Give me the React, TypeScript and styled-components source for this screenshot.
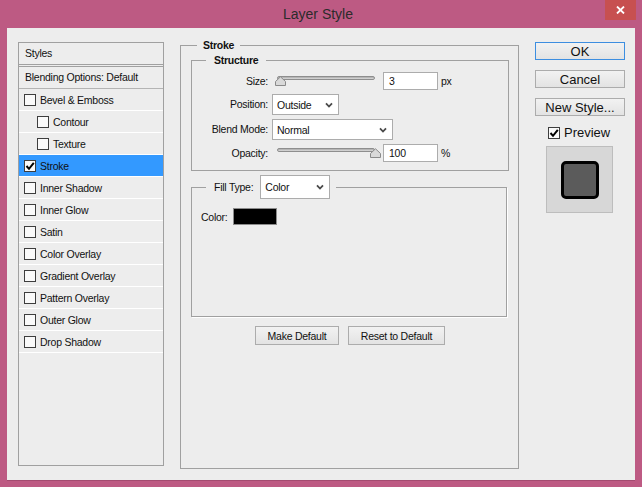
import React from "react";
import styled, { createGlobalStyle } from "styled-components";

const GlobalStyle = createGlobalStyle`
  html, body { margin: 0; padding: 0; }
  body {
    background: #bd5a83;
    font-family: "Liberation Sans", Arial, sans-serif;
    overflow: hidden;
  }
  * { box-sizing: border-box; }
`;

const Window = styled.div`
  width: 642px;
  height: 487px;
  background: #bd5a83;
  display: flex;
  flex-direction: column;
`;

const TitleBar = styled.div`
  height: 28px;
  flex: none;
  display: grid;
  grid-template-columns: 1fr auto 1fr;
  align-items: start;
  padding-right: 6px;
`;

const Title = styled.div`
  grid-column: 2;
  font-size: 14px;
  line-height: 16px;
  padding-top: 6px;
  color: #2b2b2b;
`;

const CloseButton = styled.div`
  grid-column: 3;
  justify-self: end;
  width: 31px;
  height: 20px;
  background: #c75050;
  display: flex;
  align-items: center;
  justify-content: center;
`;

const Content = styled.div`
  margin: 0 7px;
  height: 452px;
  background: #ededed;
  display: flex;
  align-items: flex-start;
  padding: 11px 0 0 11px;
  box-shadow: 0 1px 0 #a34b70;
  font-size: 10.5px;
  letter-spacing: -0.25px;
  color: #111;
`;

/* ---------- styles list ---------- */

const StyleList = styled.div`
  margin-top: 3px;
  width: 146px;
  height: 424px;
  flex: none;
  border: 1px solid #a0a0a0;
  display: flex;
  flex-direction: column;
`;

const ListHeader = styled.div<{ $double?: boolean }>`
  height: ${(p) => (p.$double ? "24px" : "22px")};
  line-height: 21px;
  padding-left: 6px;
  border-bottom: ${(p) => (p.$double ? "3px double #a0a0a0" : "1px solid #b4b4b4")};
`;

const EffectRow = styled.div<{ $indent?: boolean; $selected?: boolean }>`
  height: 22px;
  display: flex;
  align-items: center;
  gap: 4px;
  padding-left: ${(p) => (p.$indent ? "18px" : "5px")};
  border-bottom: 1px solid #ffffff;
  background: ${(p) => (p.$selected ? "#3399ff" : "transparent")};
`;

const CheckBox = styled.span`
  width: 12px;
  height: 12px;
  flex: none;
  border: 1px solid #3e3e3e;
  background: #fafafa;
  display: flex;
  align-items: center;
  justify-content: center;
`;

const Check = ({ on }: { on?: boolean }) => (
  <CheckBox>
    {on && (
      <svg width="10" height="10" viewBox="0 0 10 10">
        <path d="M1.5 5 L4 7.8 L8.8 1.8" stroke="#000" strokeWidth="2" fill="none" />
      </svg>
    )}
  </CheckBox>
);

/* ---------- group boxes ---------- */

const GroupBox = styled.fieldset<{ $w: number; $h?: number; $pad: string; $top?: number; $left?: number; $etched?: boolean }>`
  margin: ${(p) => p.$top ?? 0}px 0 0 ${(p) => p.$left ?? 0}px;
  padding: ${(p) => p.$pad};
  min-width: 0;
  width: ${(p) => p.$w}px;
  ${(p) => (p.$h ? `height: ${p.$h}px;` : "")}
  flex: none;
  border: 1px solid #a0a0a0;
  ${(p) => (p.$etched ? "box-shadow: 1px 1px 0 #ffffff;" : "")}
`;

const GroupTitle = styled.legend<{ $inset: number; $pad: string }>`
  margin-left: ${(p) => p.$inset}px;
  padding: ${(p) => p.$pad};
  line-height: 13px;
  font-weight: bold;
`;

const FillLegend = styled.legend`
  margin-left: 14px;
  margin-bottom: -6px;
  padding: 0 6px 0 8px;
`;

const FillTypeControl = styled.div`
  display: flex;
  align-items: center;
  gap: 7px;
`;

const ControlGrid = styled.div`
  margin-top: 5px;
  display: grid;
  grid-template-columns: 76px auto;
  column-gap: 4px;
  row-gap: 4px;
  align-items: center;
`;

const FieldLabel = styled.span`
  text-align: right;
  line-height: 13px;
`;

const ControlRow = styled.div`
  display: flex;
  align-items: center;
`;

const Slider = styled.div`
  position: relative;
  width: 105px;
  height: 18px;
  flex: none;
`;

const Track = styled.div`
  position: absolute;
  left: 5px;
  top: 4px;
  width: 98px;
  height: 4px;
  border-radius: 2px;
  border: 1px solid #8e8e8e;
  background: linear-gradient(#a9a9a9, #dcdcdc);
`;

const Thumb = styled.svg`
  position: absolute;
  top: 4px;
`;

const TextField = styled.div`
  margin-left: 6px;
  width: 55px;
  height: 18px;
  border: 1px solid #acacac;
  background: #fff;
  padding-left: 5px;
  line-height: 16px;
`;

const Unit = styled.span`
  margin-left: 3px;
`;

const Select = styled.div<{ $w: number; $h: number }>`
  width: ${(p) => p.$w}px;
  height: ${(p) => p.$h}px;
  border: 1px solid #acacac;
  background: #fff;
  display: flex;
  align-items: center;
  justify-content: space-between;
  padding: 0 5px 0 4px;
  font-weight: normal;
`;

const Chevron = () => (
  <svg width="8" height="6" viewBox="0 0 8 6">
    <path d="M1 1.3 L4 4.5 L7 1.3" stroke="#4a4a4a" strokeWidth="1.8" fill="none" />
  </svg>
);

const SliderThumb = ({ pct }: { pct: number }) => (
  <Thumb width="11" height="10" viewBox="0 0 11 10" style={{ left: `${2 + pct * 96}px` }}>
    <path d="M0.5 9.5 V5.5 L5.5 0.8 L10.5 5.5 V9.5 Z" fill="#d9d9d9" stroke="#8a8a8a" />
  </Thumb>
);

const ColorRow = styled.div`
  margin: 15px 0 0 9px;
  display: flex;
  align-items: center;
  gap: 5px;
`;

const Swatch = styled.div`
  width: 44px;
  height: 17px;
  background: #000;
  border: 1px solid #8c8c8c;
`;

const ButtonRow = styled.div`
  margin-top: 9px;
  display: flex;
  justify-content: center;
  gap: 9px;
`;

const PushButton = styled.div<{ $w: number; $h?: number; $big?: boolean; $default?: boolean }>`
  width: ${(p) => p.$w}px;
  height: ${(p) => p.$h ?? 19}px;
  border: 1px solid ${(p) => (p.$default ? "#3d8ee0" : "#acacac")};
  background: linear-gradient(#f2f2f2, #e3e3e3);
  display: flex;
  align-items: center;
  justify-content: center;
  font-size: ${(p) => (p.$big ? "13px" : "10.5px")};
  letter-spacing: ${(p) => (p.$big ? "0" : "-0.25px")};
  color: #111;
`;

/* ---------- right column ---------- */

const SideColumn = styled.div`
  margin: 3px 0 0 16px;
  width: 90px;
  display: flex;
  flex-direction: column;
  gap: 10px;
`;

const PreviewToggle = styled.div`
  margin-left: 13px;
  height: 13px;
  display: flex;
  align-items: center;
  gap: 4px;
  font-size: 13px;
  letter-spacing: 0;
`;

const PreviewBox = styled.div`
  margin: -3px 0 0 11px;
  width: 67px;
  height: 67px;
  background: #d7d7d7;
  border: 1px solid #bdbdbd;
  display: flex;
  align-items: center;
  justify-content: center;
`;

const PreviewShape = styled.div`
  width: 38px;
  height: 38px;
  background: #5b5b5b;
  border: 3px solid #000;
  border-radius: 5px;
`;

const effects: { label: string; indent?: boolean; on?: boolean }[] = [
  { label: "Bevel & Emboss" },
  { label: "Contour", indent: true },
  { label: "Texture", indent: true },
  { label: "Stroke", on: true },
  { label: "Inner Shadow" },
  { label: "Inner Glow" },
  { label: "Satin" },
  { label: "Color Overlay" },
  { label: "Gradient Overlay" },
  { label: "Pattern Overlay" },
  { label: "Outer Glow" },
  { label: "Drop Shadow" },
];

export default function App() {
  return (
    <Window>
      <GlobalStyle />
      <TitleBar>
        <Title>Layer Style</Title>
        <CloseButton>
          <svg width="9" height="8" viewBox="0 0 9 8">
            <path d="M1 0.5 L8 7.5 M8 0.5 L1 7.5" stroke="#fff" strokeWidth="1.8" />
          </svg>
        </CloseButton>
      </TitleBar>
      <Content>
        <StyleList>
          <ListHeader $double>Styles</ListHeader>
          <ListHeader>Blending Options: Default</ListHeader>
          {effects.map((e) => (
            <EffectRow key={e.label} $indent={e.indent} $selected={e.on}>
              <Check on={e.on} />
              <span>{e.label}</span>
            </EffectRow>
          ))}
        </StyleList>

        <GroupBox $w={339} $h={430} $pad="0 9px 0 10px" $left={16}>
          <GroupTitle $inset={6} $pad="0 6px">Stroke</GroupTitle>
          <GroupBox $w={318} $pad="0 0 8px 0" $top={2}>
            <GroupTitle $inset={14} $pad="0 8px">Structure</GroupTitle>
            <ControlGrid>
              <FieldLabel>Size:</FieldLabel>
              <ControlRow>
                <Slider>
                  <Track />
                  <SliderThumb pct={0.008} />
                </Slider>
                <TextField>3</TextField>
                <Unit>px</Unit>
              </ControlRow>
              <FieldLabel>Position:</FieldLabel>
              <ControlRow>
                <Select $w={67} $h={21}>
                  Outside
                  <Chevron />
                </Select>
              </ControlRow>
              <FieldLabel>Blend Mode:</FieldLabel>
              <ControlRow>
                <Select $w={121} $h={21}>
                  Normal
                  <Chevron />
                </Select>
              </ControlRow>
              <FieldLabel>Opacity:</FieldLabel>
              <ControlRow>
                <Slider>
                  <Track />
                  <SliderThumb pct={1} />
                </Slider>
                <TextField>100</TextField>
                <Unit>%</Unit>
              </ControlRow>
            </ControlGrid>
          </GroupBox>
          <GroupBox $w={316} $h={142} $pad="0" $top={4} $etched>
            <FillLegend>
              <FillTypeControl>
                <span>Fill Type:</span>
                <Select $w={70} $h={24}>
                  Color
                  <Chevron />
                </Select>
              </FillTypeControl>
            </FillLegend>
            <ColorRow>
              <span>Color:</span>
              <Swatch />
            </ColorRow>
          </GroupBox>
          <ButtonRow>
            <PushButton $w={84}>Make Default</PushButton>
            <PushButton $w={97}>Reset to Default</PushButton>
          </ButtonRow>
        </GroupBox>

        <SideColumn>
          <PushButton $w={90} $h={18} $big $default>OK</PushButton>
          <PushButton $w={90} $h={18} $big>Cancel</PushButton>
          <PushButton $w={90} $h={18} $big>New Style...</PushButton>
          <PreviewToggle>
            <Check on />
            <span>Preview</span>
          </PreviewToggle>
          <PreviewBox>
            <PreviewShape />
          </PreviewBox>
        </SideColumn>
      </Content>
    </Window>
  );
}
